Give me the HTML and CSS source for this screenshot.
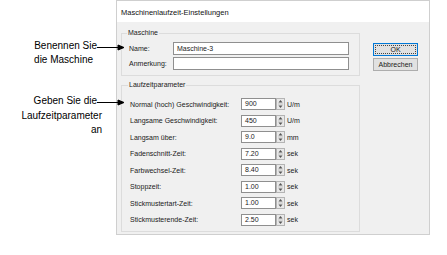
FILE: index.html
```html
<!DOCTYPE html>
<html lang="de">
<head>
    <meta charset="UTF-8">
    <title>Maschinenlaufzeit-Einstellungen</title>
    <link rel="stylesheet" href="styles.css">
</head>
<body>
    <div class="page">
        <div class="notes">
            <p class="note note-name">Benennen Sie<svg class="arrow" viewBox="0 0 27 7"><line x1="0" y1="3.5" x2="22" y2="3.5"/><polygon points="21,1 27,3.5 21,6"/></svg><br>die Maschine</p>
            <p class="note note-params">Geben Sie die<svg class="arrow" viewBox="0 0 27 7"><line x1="0" y1="3.5" x2="22" y2="3.5"/><polygon points="21,1 27,3.5 21,6"/></svg><br>Laufzeitparameter<br>an</p>
        </div>

        <div class="dialog">
            <div class="titlebar">Maschinenlaufzeit-Einstellungen</div>
            <div class="dialog-body">
                <div class="groups">
                    <fieldset class="group group-machine">
                        <legend>Maschine</legend>
                        <div class="field"><span class="label">Name:</span><span class="text">Maschine-3</span></div>
                        <div class="field"><span class="label">Anmerkung:</span><span class="text"></span></div>
                    </fieldset>

                    <fieldset class="group group-params">
                        <legend>Laufzeitparameter</legend>
                        <div class="param"><span class="label">Normal (hoch) Geschwindigkeit:</span><span class="num">900</span><svg class="spin" viewBox="0 0 9 12"><rect x="0.5" y="0.5" width="8" height="11"/><line x1="2" y1="6" x2="7" y2="6"/><polygon points="4.5,2 6.5,4.5 2.5,4.5"/><polygon points="2.5,7.5 6.5,7.5 4.5,10"/></svg><span class="unit">U/m</span></div>
                        <div class="param"><span class="label">Langsame Geschwindigkeit:</span><span class="num">450</span><svg class="spin" viewBox="0 0 9 12"><rect x="0.5" y="0.5" width="8" height="11"/><line x1="2" y1="6" x2="7" y2="6"/><polygon points="4.5,2 6.5,4.5 2.5,4.5"/><polygon points="2.5,7.5 6.5,7.5 4.5,10"/></svg><span class="unit">U/m</span></div>
                        <div class="param"><span class="label">Langsam über:</span><span class="num">9.0</span><svg class="spin" viewBox="0 0 9 12"><rect x="0.5" y="0.5" width="8" height="11"/><line x1="2" y1="6" x2="7" y2="6"/><polygon points="4.5,2 6.5,4.5 2.5,4.5"/><polygon points="2.5,7.5 6.5,7.5 4.5,10"/></svg><span class="unit">mm</span></div>
                        <div class="param"><span class="label">Fadenschnitt-Zeit:</span><span class="num">7.20</span><svg class="spin" viewBox="0 0 9 12"><rect x="0.5" y="0.5" width="8" height="11"/><line x1="2" y1="6" x2="7" y2="6"/><polygon points="4.5,2 6.5,4.5 2.5,4.5"/><polygon points="2.5,7.5 6.5,7.5 4.5,10"/></svg><span class="unit">sek</span></div>
                        <div class="param"><span class="label">Farbwechsel-Zeit:</span><span class="num">8.40</span><svg class="spin" viewBox="0 0 9 12"><rect x="0.5" y="0.5" width="8" height="11"/><line x1="2" y1="6" x2="7" y2="6"/><polygon points="4.5,2 6.5,4.5 2.5,4.5"/><polygon points="2.5,7.5 6.5,7.5 4.5,10"/></svg><span class="unit">sek</span></div>
                        <div class="param"><span class="label">Stoppzeit:</span><span class="num">1.00</span><svg class="spin" viewBox="0 0 9 12"><rect x="0.5" y="0.5" width="8" height="11"/><line x1="2" y1="6" x2="7" y2="6"/><polygon points="4.5,2 6.5,4.5 2.5,4.5"/><polygon points="2.5,7.5 6.5,7.5 4.5,10"/></svg><span class="unit">sek</span></div>
                        <div class="param"><span class="label">Stickmustertart-Zeit:</span><span class="num">1.00</span><svg class="spin" viewBox="0 0 9 12"><rect x="0.5" y="0.5" width="8" height="11"/><line x1="2" y1="6" x2="7" y2="6"/><polygon points="4.5,2 6.5,4.5 2.5,4.5"/><polygon points="2.5,7.5 6.5,7.5 4.5,10"/></svg><span class="unit">sek</span></div>
                        <div class="param"><span class="label">Stickmusterende-Zeit:</span><span class="num">2.50</span><svg class="spin" viewBox="0 0 9 12"><rect x="0.5" y="0.5" width="8" height="11"/><line x1="2" y1="6" x2="7" y2="6"/><polygon points="4.5,2 6.5,4.5 2.5,4.5"/><polygon points="2.5,7.5 6.5,7.5 4.5,10"/></svg><span class="unit">sek</span></div>
                    </fieldset>
                </div>

                <div class="buttons">
                    <button class="btn btn-default">OK</button>
                    <button class="btn">Abbrechen</button>
                </div>
            </div>
        </div>
    </div>
</body>
</html>
```

FILE: styles.css
```css
* {
    margin: 0;
    padding: 0;
    box-sizing: border-box;
}

body {
    width: 447px;
    height: 255px;
    background: #fff;
    font-family: 'Liberation Sans', Arial, sans-serif;
    overflow: hidden;
}

.page {
    display: flex;
}

/* Callouts on the left */
.notes {
    width: 116px;
    flex: none;
    padding-top: 39px;
    position: relative;
    z-index: 1;
    font-size: 10px;
    line-height: 14px;
    color: #000;
}

.note {
    text-align: right;
}

.note-name {
    padding-right: 23px;
}

.note-params {
    margin-top: 27px;
    padding-right: 14px;
    line-height: 14.5px;
}

.arrow {
    width: 27px;
    height: 7px;
    vertical-align: -2px;
    stroke: #000;
    stroke-width: 1;
    fill: #000;
}

.note-name .arrow {
    margin-right: -31px;
}

.note-params .arrow {
    margin-right: -22px;
}

/* Dialog window */
.dialog {
    width: 314px;
    height: 235px;
    border: 1px solid #cfcfcf;
    display: flex;
    flex-direction: column;
    font-size: 7px;
    color: #1a1a1a;
}

.titlebar {
    height: 21px;
    background: #fff;
    padding-left: 4px;
    font-size: 7.5px;
    line-height: 23px;
    color: #111;
}

.dialog-body {
    flex: 1;
    display: flex;
    background: #f0f0f0;
    padding: 7px 0 0 4px;
}

.group {
    width: 239px;
    border: 1px solid #dcdcdc;
}

.group legend {
    font-size: 7px;
    line-height: 8px;
    padding: 0 1px;
    margin-left: -2px;
}

.group-machine {
    padding: 5px 0 5px 7px;
}

.group-params {
    margin-top: 5px;
    padding: 7px 0 3px 8px;
}

.field {
    display: flex;
    align-items: center;
    height: 13px;
}

.field + .field {
    margin-top: 2px;
}

.field .label {
    width: 44px;
}

.text {
    width: 176px;
    height: 13px;
    background: #fff;
    border: 1px solid #8f8f8f;
    padding-left: 3px;
    line-height: 11px;
}

.param {
    display: flex;
    align-items: center;
    height: 16.5px;
}

.param .label {
    width: 111px;
}

.num {
    width: 35px;
    height: 12px;
    background: #fff;
    border: 1px solid #8f8f8f;
    padding-left: 3px;
    line-height: 10px;
}

.spin {
    width: 9px;
    height: 12px;
    stroke: #b4b4b4;
    fill: #e8e8e8;
    stroke-width: 1;
}

.spin line {
    stroke: #c4c4c4;
}

.spin polygon {
    fill: #555;
    stroke: none;
}

.unit {
    margin-left: 2px;
}

/* Buttons */
.buttons {
    margin-left: 13px;
    padding-top: 14px;
    display: flex;
    flex-direction: column;
    gap: 2px;
}

.btn {
    width: 45px;
    height: 13px;
    background: #e1e1e1;
    border: 1px solid #adadad;
    font-family: inherit;
    font-size: 7px;
    color: #1a1a1a;
}

.btn-default {
    border-color: #0078d7;
    outline: 1px dotted #444;
    outline-offset: -3px;
}
```
